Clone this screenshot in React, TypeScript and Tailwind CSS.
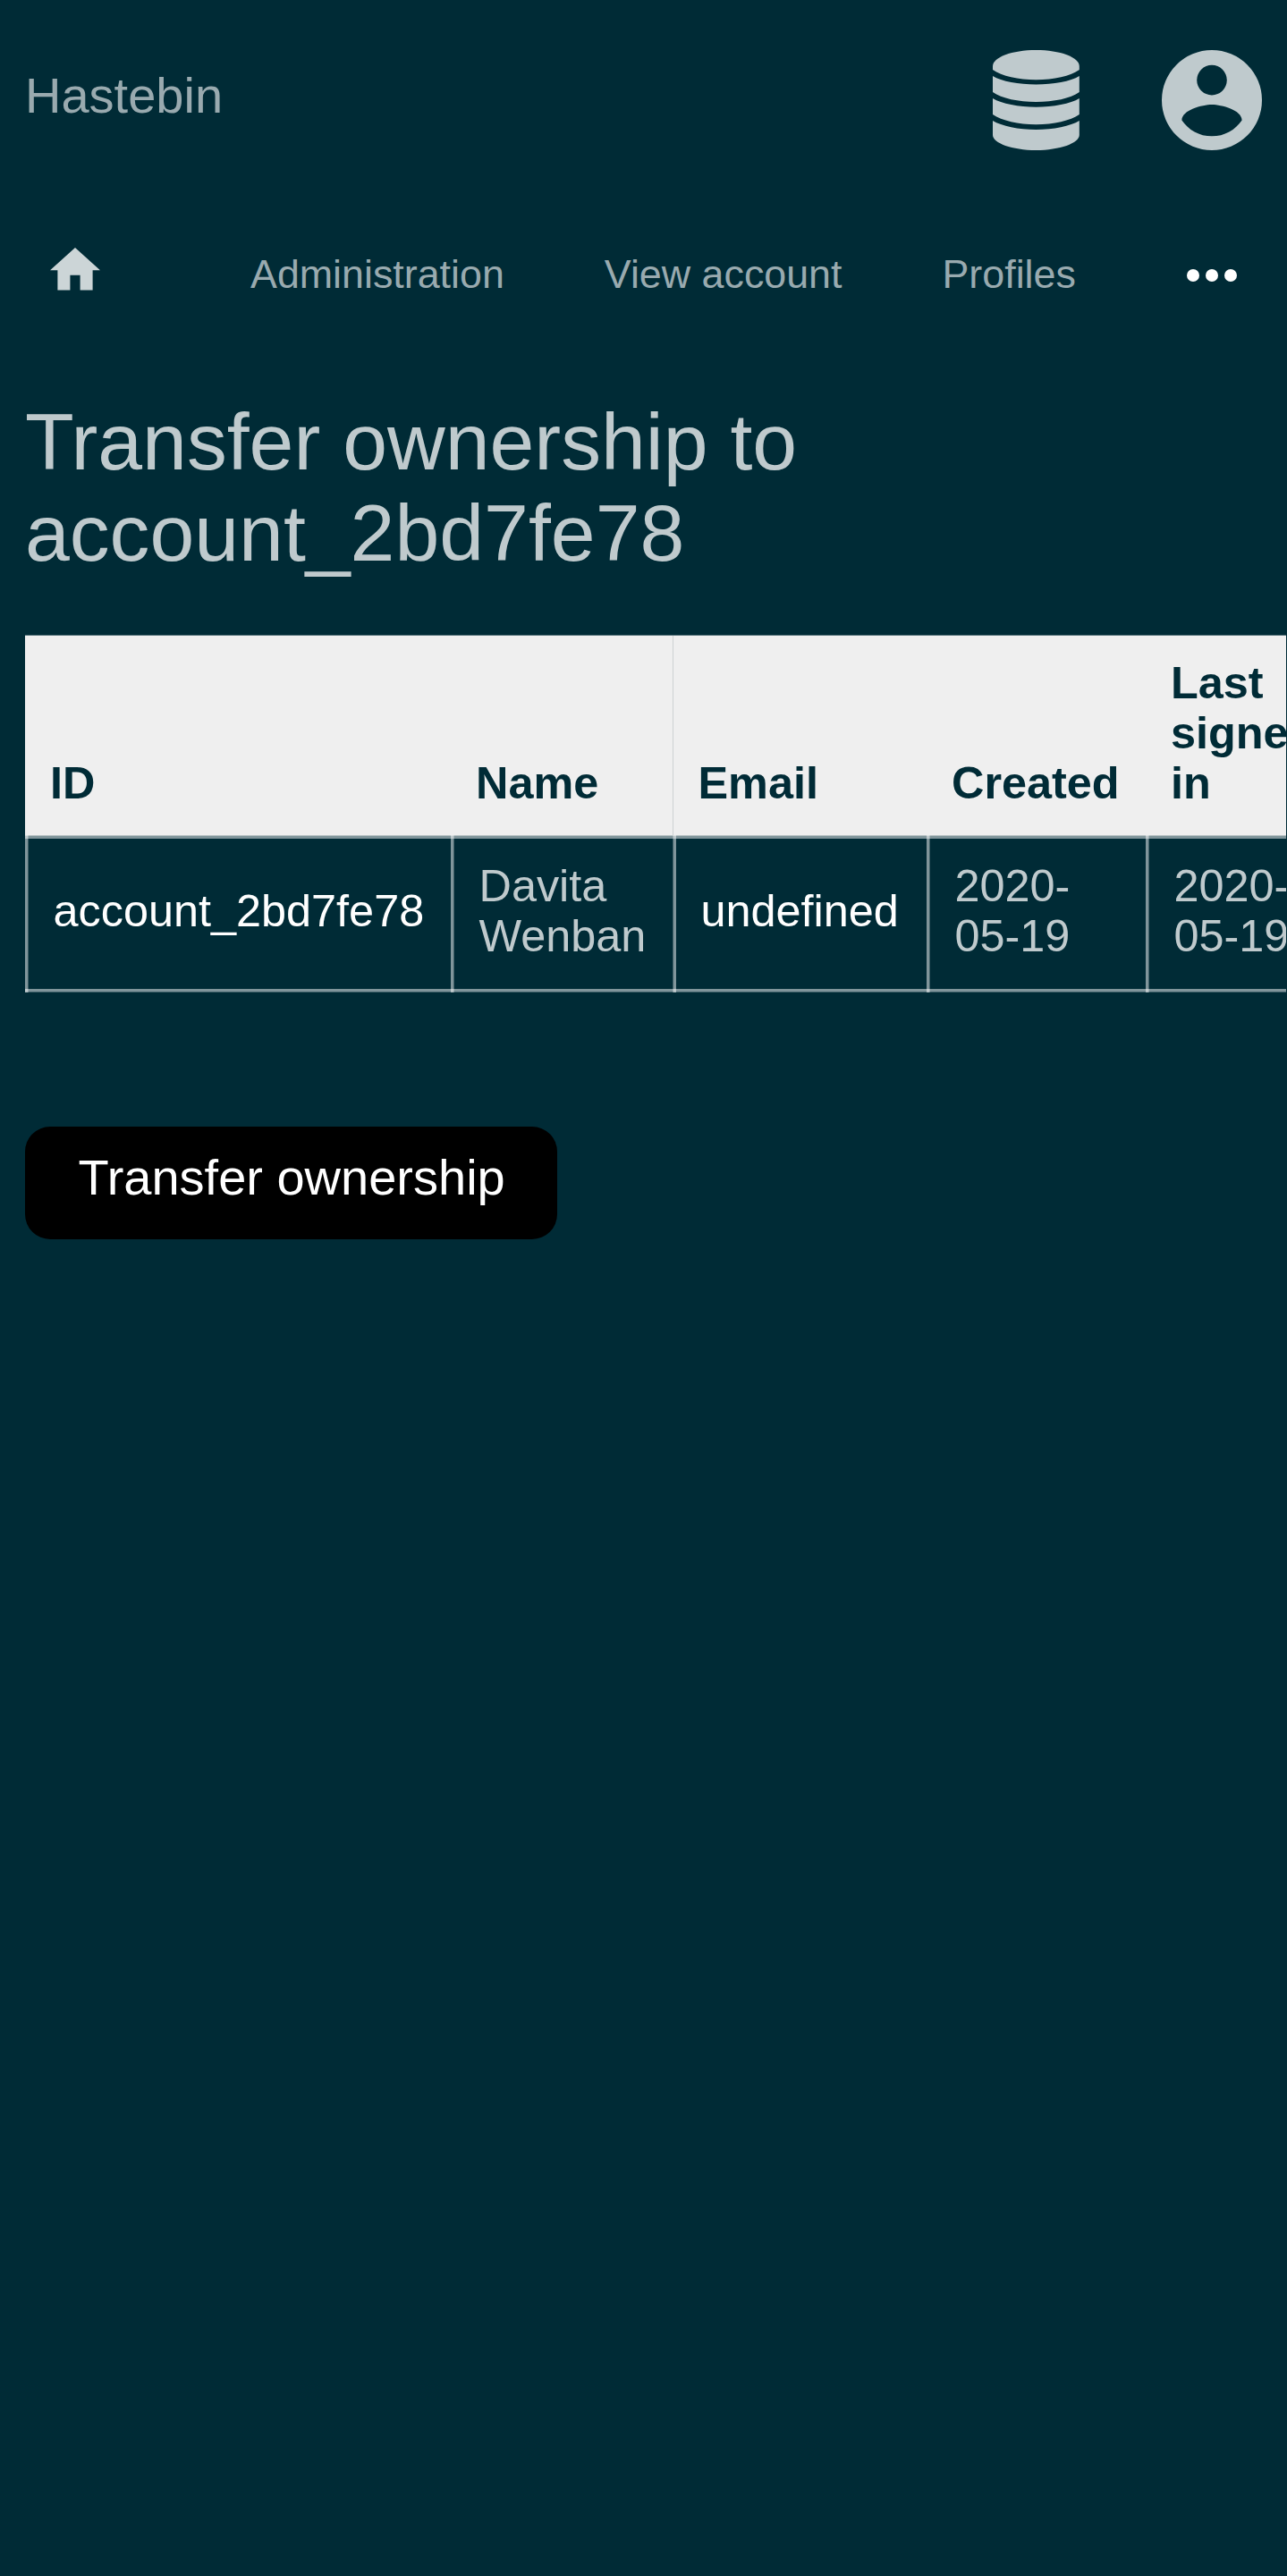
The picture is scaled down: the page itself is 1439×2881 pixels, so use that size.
import React from "react";

const columns = [
  { head: "ID", body: "account_2bd7fe78", width: "w-[476px]", link: true },
  { head: "Name", body: "Davita Wenban", width: "w-[248px]", link: false },
  { head: "Email", body: "undefined", width: "w-[284px]", link: true },
  { head: "Created", body: "2020-05-19", width: "w-[245px]", link: false },
  { head: "Last signed in", body: "2020-05-19", width: "w-[245px]", link: false },
];

function DatabaseIcon() {
  return (
    <svg viewBox="0 0 97 112" className="h-28 w-[97px] fill-[#bfcacd]">
      <path d="M0 18C0 8 21.500 0 48.400 0S96.800 8 96.800 18V22C87 29 68 33.300 48.400 33.300S10 29 0 22Z" />
      <path d="M0 29C10 35 29 38.500 48.400 38.500S87 35 96.800 29V47C87 54 68 58 48.400 58S10 54 0 47Z" />
      <path d="M0 54C10 60 29 63.700 48.400 63.700S87 60 96.800 54V72C87 79 68 83.200 48.400 83.200S10 79 0 72Z" />
      <path d="M0 79C10 85 29 89 48.400 89S87 85 96.800 79V95C96.800 104 75 112 48.400 112S0 104 0 95Z" />
    </svg>
  );
}

function AccountIcon() {
  return (
    <svg viewBox="2 2 20 20" className="size-28 fill-[#bfcacd]">
      <path d="M12 19.200C9.500 19.200 7.290 17.920 6 16C6.030 14 10 12.900 12 12.900C14 12.900 17.970 14 18 16C16.710 17.920 14.500 19.200 12 19.200M12 5A3 3 0 0 1 15 8A3 3 0 0 1 12 11A3 3 0 0 1 9 8A3 3 0 0 1 12 5M12 2A10 10 0 0 0 2 12A10 10 0 0 0 12 22A10 10 0 0 0 22 12A10 10 0 0 0 12 2Z" />
    </svg>
  );
}

function HomeIcon() {
  return (
    <svg viewBox="2 3 20 17" className="mt-[-4px] h-[47.6px] w-14 fill-[#ccd5d7]">
      <path d="M10 20V14H14V20H19V12H22L12 3L2 12H5V20H10Z" />
    </svg>
  );
}

function DotsIcon() {
  return (
    <svg viewBox="4 10 16 4" className="mt-5 h-[14px] w-14 fill-white">
      <circle cx="6" cy="12" r="2" />
      <circle cx="12" cy="12" r="2" />
      <circle cx="18" cy="12" r="2" />
    </svg>
  );
}

export default function App() {
  return (
    <div className="min-h-[2881px] w-full overflow-hidden bg-[#002b36] font-['Liberation_Sans',Arial,sans-serif]">
      <header className="flex items-start justify-between pr-[28.5px] pl-7 pt-14">
        <a className="mt-[19px] text-[56px] leading-[64px] text-[#99aaaf]">Hastebin</a>
        <div className="flex gap-[92px]">
          <DatabaseIcon />
          <AccountIcon />
        </div>
      </header>

      <nav className="mt-[113px] flex h-[51px] items-start gap-28 pl-14 text-[44.8px] leading-[51px] whitespace-nowrap text-[#99aaaf]">
        <a className="w-28"><HomeIcon /></a>
        <a>Administration</a>
        <a>View account</a>
        <a>Profiles</a>
        <a className="ml-3"><DotsIcon /></a>
      </nav>

      <main className="pl-7">
        <h1 className="mt-[111px] w-[1000px] text-[89.6px] leading-[102px] text-[#bfcacd]">
          Transfer ownership to account_2bd7fe78
        </h1>

        <div className="mt-[63px] w-[1410px] overflow-hidden">
          <div className="w-[1502px]">
            <div className="flex h-[224px] items-stretch border-t border-[#5c777e] bg-[#efefef] text-[50.4px] leading-[56px] font-bold text-[#002b36]">
              {columns.map((c) => (
                <div key={c.head} className={`${c.width} flex shrink-0 items-end pb-[30px] ${c.head === "Email" ? "border-l border-[#cdd1d2] pl-[27.5px]" : "pl-7"}`}>
                  <span className={c.head === "Last signed in" ? "w-[180px]" : ""}>{c.head}</span>
                </div>
              ))}
            </div>
            <div className="flex h-[176px] items-stretch bg-[linear-gradient(#b7c2c4_1px,#80959b_1px,#80959b_4px,transparent_4px,transparent_172px,#80959b_172px,#80959b_175px,#40606a_175px)] text-[50.4px] leading-[56px]">
              {columns.map((c) => (
                <div key={c.head} className={`${c.width} flex shrink-0`}>
                  <div
                    className={`w-1 ${
                      c.head === "Email"
                        ? "bg-[linear-gradient(to_right,rgba(255,255,255,0.25)_1px,rgba(255,255,255,0.5)_1px)]"
                        : "bg-[linear-gradient(to_right,rgba(255,255,255,0.5)_3px,rgba(255,255,255,0.25)_3px)]"
                    }`}
                  />
                  <div className={`flex flex-1 items-center pb-[7px] pl-[27.5px] ${c.link ? "text-white" : "text-[#bfcacd]"}`}>
                    <span className={c.link ? "" : "w-[190px]"}>{c.body}</span>
                  </div>
                </div>
              ))}
            </div>
          </div>
        </div>

        <button className="mt-[150px] flex h-[126px] w-[595px] items-start rounded-[28px] bg-black pt-[25px] pl-[59.5px] text-[56px] leading-[64px] whitespace-nowrap text-white">
          Transfer ownership
        </button>
      </main>
    </div>
  );
}
